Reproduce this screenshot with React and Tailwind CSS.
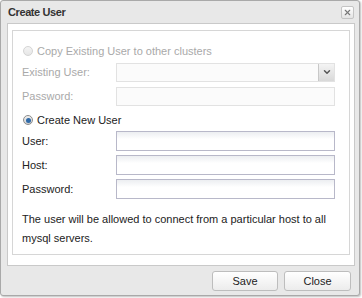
import { X, ChevronDown } from 'lucide-react';

function Radio({ checked, disabled }) {
  return (
    <span
      className={`w-[10px] h-[10px] rounded-full border flex items-center justify-center shrink-0 ${
        disabled
          ? 'border-[#d4d4d4] bg-gradient-to-b from-[#f4f4f4] to-[#e6e6e6]'
          : 'border-[#8c8c8c] bg-gradient-to-b from-[#f0f0f0] to-[#d0d0d0]'
      }`}
    >
      {checked && <span className="w-[5px] h-[5px] rounded-full bg-[#2f6aa8]" />}
    </span>
  );
}

function Field({ label, disabled, select }) {
  return (
    <div className="flex items-center h-[20px]">
      <span className={`w-[94px] ${disabled ? 'text-[#a9a9a9]' : 'text-[#222]'}`}>{label}</span>
      <div
        className={`w-[219px] border flex justify-end ${
          disabled
            ? 'h-[19px] border-[#e2e2e2] bg-[#fbfbfb]'
            : 'h-[20px] border-[#b8b8c9] bg-gradient-to-b from-[#eceef1] to-white to-[40%]'
        }`}
      >
        {select && (
          <div className="w-[16px] h-full border-l border-[#c8c8c8] bg-gradient-to-b from-[#f4f4f4] to-[#d9d9d9] flex items-center justify-center">
            <ChevronDown size={10} strokeWidth={3.5} className="text-[#555]" />
          </div>
        )}
      </div>
    </div>
  );
}

export default function App() {
  return (
    <div className="w-[362px] h-[298px] bg-white" style={{ fontFamily: '"Liberation Sans", Arial, sans-serif' }}>
      <div className="w-[360px] h-[296px] bg-[#e8e8e8] border border-[#a9a9a9] rounded-[3px] shadow-[1px_1px_2px_rgba(0,0,0,0.25)] flex flex-col text-[11px]">
        {/* Title bar */}
        <div className="h-[22px] flex items-center justify-between pl-[7px] pr-[5px]">
          <span className="font-bold text-[#333] text-[11px] tracking-[-0.4px]">Create User</span>
          <button className="w-[13px] h-[13px] border border-[#c4c4c4] rounded-[2px] bg-gradient-to-b from-white to-[#e4e4e4] flex items-center justify-center">
            <X size={9} strokeWidth={3} className="text-[#777]" />
          </button>
        </div>

        {/* Content panel */}
        <div className="ml-[6px] mr-[4px] border border-[#c9c9c9] bg-white pt-[6px] px-[4px] pb-[10px]">
          <div className="border border-[#d6d6d6] h-[225px] pl-[9px] pt-[13px] flex flex-col">
            <div className="flex items-center gap-[4px] h-[14px] pl-[1px] text-[#a9a9a9]">
              <Radio disabled />
              <span>Copy Existing User to other clusters</span>
            </div>
            <div className="mt-[4px] flex flex-col gap-[4px]">
              <Field label="Existing User:" disabled select />
              <Field label="Password:" disabled />
            </div>
            <div className="mt-[7px] flex items-center gap-[4px] h-[14px] pl-[1px] text-[#222]">
              <Radio checked />
              <span>Create New User</span>
            </div>
            <div className="mt-[4px] flex flex-col gap-[4px]">
              <Field label="User:" />
              <Field label="Host:" />
              <Field label="Password:" />
            </div>
            <p className="mt-[11px] pr-[4px] leading-[19px] text-[#222]">
              The user will be allowed to connect from a particular host to all mysql servers.
            </p>
          </div>
        </div>

        {/* Footer */}
        <div className="flex justify-end gap-[6px] pr-[8px] pt-[5px]">
          <button className="w-[66px] h-[20px] border border-[#bdbdbd] rounded-[3px] bg-gradient-to-b from-white to-[#ececec] text-[#222] text-[11px]">
            Save
          </button>
          <button className="w-[67px] h-[20px] border border-[#bdbdbd] rounded-[3px] bg-gradient-to-b from-white to-[#ececec] text-[#222] text-[11px]">
            Close
          </button>
        </div>
      </div>
    </div>
  );
}
